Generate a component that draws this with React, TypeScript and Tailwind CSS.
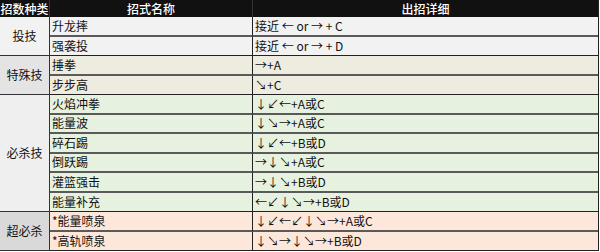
import React from "react";

type Move = { name: string; input: string };
type Group = { kind: string; cellBg: string; rowBg: string; moves: Move[] };

const GROUPS: Group[] = [
  {
    kind: "投技",
    cellBg: "bg-[#f2f2f2]",
    rowBg: "bg-[#f2f2f2]",
    moves: [
      { name: "升龙摔", input: "接近 ← or → + C" },
      { name: "强袭投", input: "接近 ← or → + D" },
    ],
  },
  {
    kind: "特殊技",
    cellBg: "bg-[#e4e4e4]",
    rowBg: "bg-[#eeebdf]",
    moves: [
      { name: "捶拳", input: "→+A" },
      { name: "步步高", input: "↘+C" },
    ],
  },
  {
    kind: "必杀技",
    cellBg: "bg-[#efefef]",
    rowBg: "bg-[#e7f1df]",
    moves: [
      { name: "火焰冲拳", input: "↓↙←+A或C" },
      { name: "能量波", input: "↓↘→+A或C" },
      { name: "碎石踢", input: "↓↙←+B或D" },
      { name: "倒跃踢", input: "→↓↘+A或C" },
      { name: "灌篮强击", input: "→↓↘+B或D" },
      { name: "能量补充", input: "←↙↓↘→+B或D" },
    ],
  },
  {
    kind: "超必杀",
    cellBg: "bg-[#d9d9d9]",
    rowBg: "bg-[#fde7da]",
    moves: [
      { name: "*能量喷泉", input: "↓↙←↙↓↘→+A或C" },
      { name: "*高轨喷泉", input: "↓↘→↓↘→+B或D" },
    ],
  },
];

const font = { fontFamily: '"Noto Sans CJK SC", "Liberation Sans", sans-serif' };

export default function App() {
  return (
    <div className="h-[252px] w-[600px] bg-white" style={font}>
      <div className="grid w-[599px] grid-cols-[50px_203px_1fr] grid-rows-[17px_repeat(12,19.5px)] border-r border-[#222] text-[12px] leading-none text-[#111]">
        <div className="flex items-center justify-center overflow-visible whitespace-nowrap border-r border-[#333] bg-[#111] text-[12px] font-medium leading-[17px] text-white">
          招数种类
        </div>
        <div className="flex items-center justify-center whitespace-nowrap border-r border-[#333] bg-[#111] text-[12px] font-medium leading-[17px] text-white">
          招式名称
        </div>
        <div className="flex items-center justify-center whitespace-nowrap bg-[#111] text-[12px] font-medium leading-[17px] text-white">
          出招详细
        </div>

        {GROUPS.map((g) => (
          <React.Fragment key={g.kind}>
            <div
              className={`flex items-center justify-center border-r border-b border-[#333] ${g.cellBg} text-[12px]`}
              style={{ gridRow: `span ${g.moves.length}` }}
            >
              {g.kind}
            </div>
            {g.moves.map((m, i) => (
              <React.Fragment key={m.name}>
                <div
                  className={`flex items-center border-r border-[#222] pl-[2px] ${g.rowBg} ${
                    i === g.moves.length - 1 ? "border-b border-b-[#222]" : "border-b-2 border-b-[#5a5a5a]"
                  }`}
                >
                  {m.name}
                </div>
                <div
                  className={`flex items-center pl-[2px] ${g.rowBg} ${
                    i === g.moves.length - 1 ? "border-b border-b-[#222]" : "border-b-2 border-b-[#5a5a5a]"
                  }`}
                >
                  {m.input}
                </div>
              </React.Fragment>
            ))}
          </React.Fragment>
        ))}
      </div>
    </div>
  );
}
